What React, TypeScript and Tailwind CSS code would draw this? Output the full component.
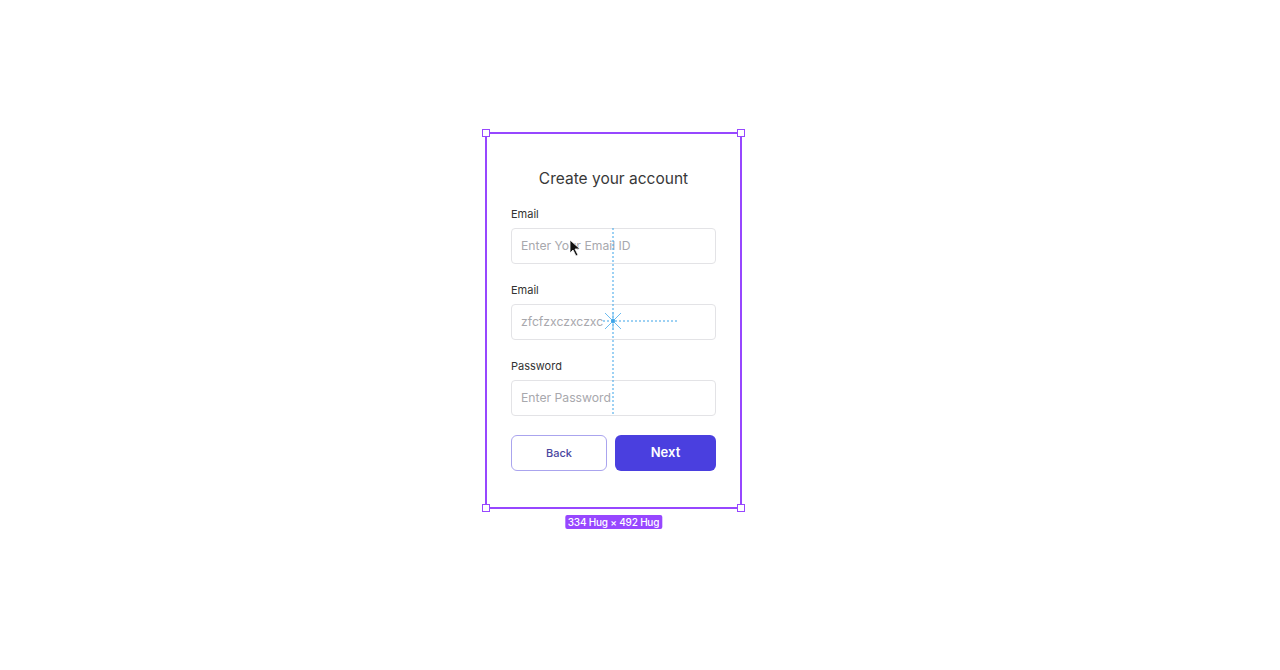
import React from "react";

function Handle({ className }: { className: string }) {
  return (
    <div
      className={`absolute w-[8px] h-[8px] bg-white border border-[#9747ff] ${className}`}
    />
  );
}

function Field({ label, placeholder, value }: { label: string; placeholder: string; value?: string }) {
  return (
    <div className="flex flex-col gap-[6px]">
      <div className="text-[11px] leading-[16px] text-[#333333]">{label}</div>
      <div className="h-[36px] rounded-[4px] border border-[#e3e3e6] bg-white flex items-center px-[9px]">
        <span className="text-[12.2px] text-[#a8a8ad]">{value ?? placeholder}</span>
      </div>
    </div>
  );
}

export default function App() {
  return (
    <div
      className="w-[1280px] h-[670px] bg-white overflow-hidden"
      style={{ fontFamily: "Inter, 'Noto Sans', sans-serif" }}
    >
      <div className="pt-[132px] pl-[485px]">
        <div className="relative w-[257px]">
          <div className="border-2 border-[#9747ff] bg-white px-[24px] pt-[33px] pb-[36px] flex flex-col">
            <div className="text-center text-[15.5px] leading-[24px] text-[#383838] font-normal">
              Create your account
            </div>
            <div className="mt-[15px] flex flex-col gap-[18px]">
              <Field label="Email" placeholder="Enter Your Email ID" />
              <Field label="Email" placeholder="" value="zfcfzxczxczxc" />
              <Field label="Password" placeholder="Enter Password" />
            </div>
            <div className="mt-[19px] flex gap-[8px]">
              <button className="w-[96px] h-[36px] rounded-[6px] border border-[#aaa4ee] bg-white text-[11px] font-medium text-[#4a46a0]">
                Back
              </button>
              <button className="flex-1 h-[36px] rounded-[6px] bg-[#4a3fdf] text-[13px] font-semibold text-white">
                Next
              </button>
            </div>
          </div>
          <Handle className="-left-[3px] -top-[3px]" />
          <Handle className="-right-[3px] -top-[3px]" />
          <Handle className="-left-[3px] -bottom-[3px]" />
          <Handle className="-right-[3px] -bottom-[3px]" />

          {/* measurement guides */}
          <svg className="absolute left-0 top-0 pointer-events-none" width="257" height="380">
            <line x1="128" y1="96" x2="128" y2="283" stroke="#3aa3e8" strokeWidth="1" strokeDasharray="2 2" />
            <line x1="118" y1="189" x2="193" y2="189" stroke="#3aa3e8" strokeWidth="1" strokeDasharray="2 2" />
            <g stroke="#6cbcf0" strokeWidth="1">
              <line x1="120" y1="181" x2="136" y2="197" />
              <line x1="136" y1="181" x2="120" y2="197" />
              <line x1="128" y1="180" x2="128" y2="198" />
            </g>
            <circle cx="128" cy="189" r="2" fill="#3aa3e8" />
            {/* cursor */}
            <path d="M85 108 L85 121 L88 118 L91 124 L93 123 L90 117 L95 117 Z" fill="#111" stroke="#fff" strokeWidth="0.8" />
          </svg>

          <div className="absolute left-1/2 -translate-x-1/2 top-[383px] bg-[#9747ff] text-white text-[10px] leading-[14px] font-medium px-[3px] rounded-[2px] whitespace-nowrap tracking-[-0.2px]">
            334 Hug × 492 Hug
          </div>
        </div>
      </div>
    </div>
  );
}
